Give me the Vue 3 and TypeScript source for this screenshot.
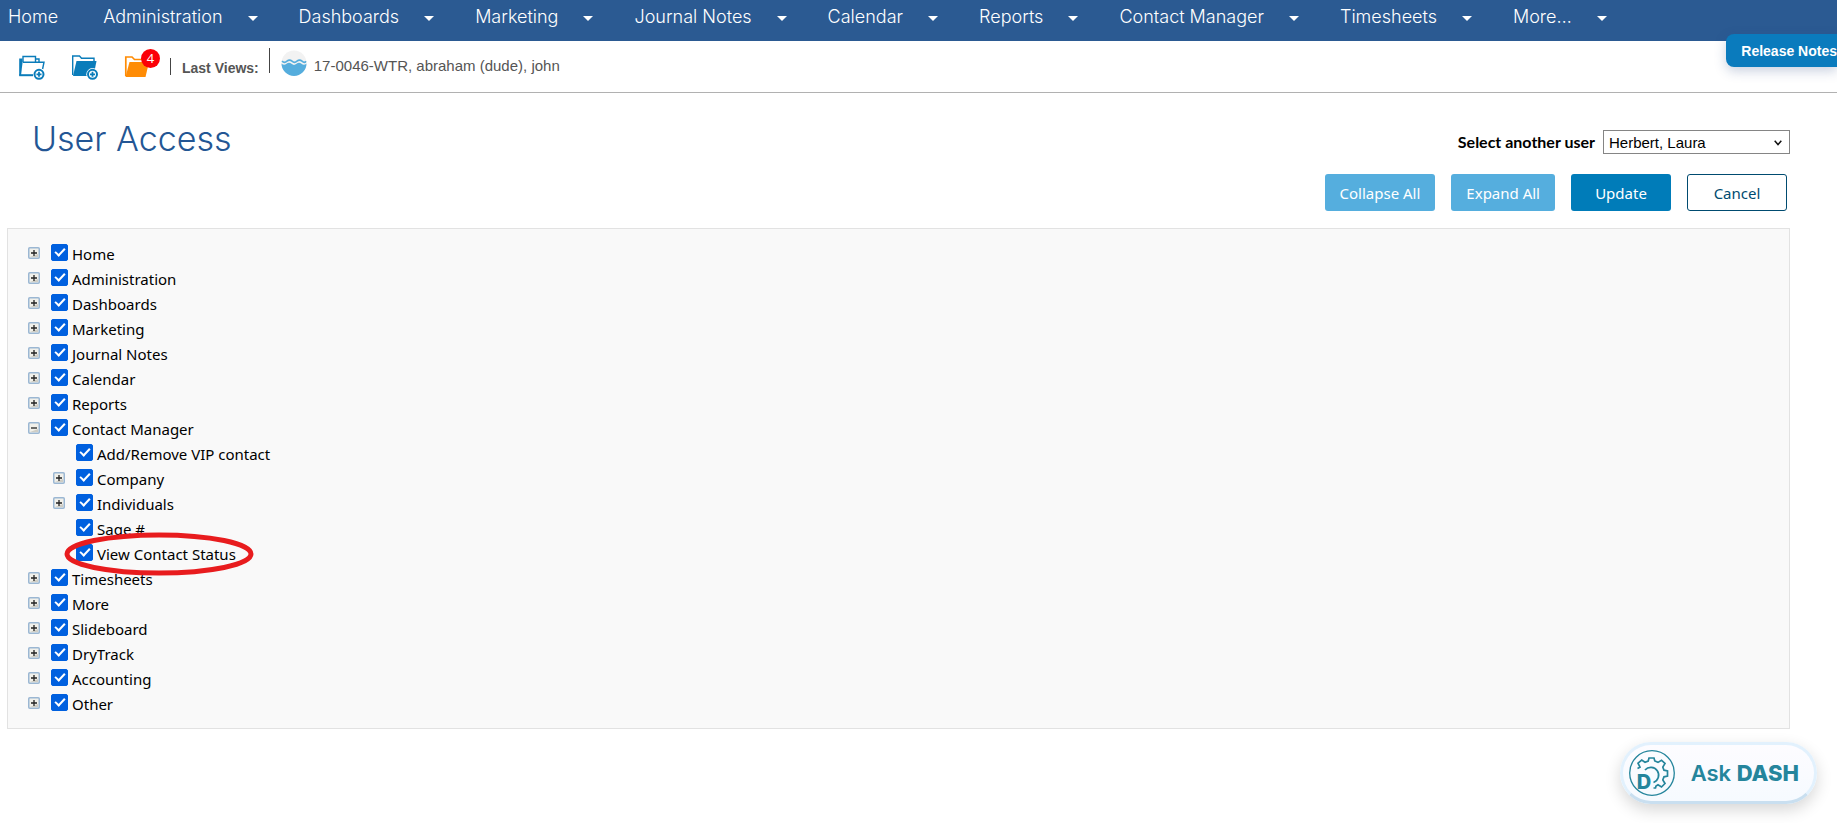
<script setup lang="ts">
import { reactive, ref } from 'vue'

interface TreeNode {
  label: string
  checked: boolean
  expandable: boolean
  open: boolean
  circled?: boolean
  children: TreeNode[]
}

const leaf = (label: string, expandable = false, circled = false): TreeNode => ({
  label,
  checked: true,
  expandable,
  open: false,
  circled,
  children: [],
})

const menus = [
  'Administration',
  'Dashboards',
  'Marketing',
  'Journal Notes',
  'Calendar',
  'Reports',
  'Contact Manager',
  'Timesheets',
  'More…',
]

const tree = reactive<TreeNode[]>([
  leaf('Home', true),
  leaf('Administration', true),
  leaf('Dashboards', true),
  leaf('Marketing', true),
  leaf('Journal Notes', true),
  leaf('Calendar', true),
  leaf('Reports', true),
  {
    label: 'Contact Manager',
    checked: true,
    expandable: true,
    open: true,
    children: [
      leaf('Add/Remove VIP contact'),
      leaf('Company', true),
      leaf('Individuals', true),
      leaf('Sage #'),
      leaf('View Contact Status', false, true),
    ],
  },
  leaf('Timesheets', true),
  leaf('More', true),
  leaf('Slideboard', true),
  leaf('DryTrack', true),
  leaf('Accounting', true),
  leaf('Other', true),
])

const user = ref('Herbert, Laura')

function setAll(open: boolean) {
  tree.forEach((node) => (node.open = open))
}
</script>

<template>
  <div class="page">
    <nav class="nav">
      <a class="nav-link" href="#">Home</a>
      <a v-for="menu in menus" :key="menu" class="nav-link" href="#">
        {{ menu }}
        <svg class="caret" width="10" height="5" viewBox="0 0 10 5"><path d="M0 0h10L5 5z" fill="#fff" /></svg>
      </a>
    </nav>

    <button class="release" type="button">Release Notes</button>

    <div class="toolbar">
      <button class="tool" type="button" aria-label="New job">
        <svg width="28" height="26" viewBox="0 0 28 26" fill="none" stroke="#0a7cba" stroke-width="1.4">
          <path d="M1.200 4.500H4.500V9L3 21.500H1.200z" fill="#0a7cba" stroke="none" />
          <path d="M1.200 21.200H15" stroke-width="2" />
          <path d="M4.800 8.200H26L24.600 15" />
          <path d="M5 8V2.500H17.500V8M17.500 5H21V8" />
          <circle cx="21" cy="20.300" r="4.500" fill="#fff" stroke-width="2" />
          <path d="M21 17.800v5M18.500 20.300h5" stroke-width="1.800" />
        </svg>
      </button>
      <button class="tool" type="button" aria-label="New folder">
        <svg width="28" height="26" viewBox="0 0 28 26" fill="none" stroke="#0a7cba">
          <path d="M1.700 21V2H8.500L10.500 4.200H23V7" stroke-width="1.400" />
          <path d="M5.500 7H25.500L22.500 22H2z" fill="#0a7cba" stroke="none" />
          <circle cx="21.500" cy="20.300" r="6.200" fill="#fff" stroke="none" />
          <circle cx="21.500" cy="20.300" r="4.500" fill="#fff" stroke-width="2" />
          <path d="M21.500 17.800v5M19 20.300h5" stroke-width="1.800" />
        </svg>
      </button>
      <button class="tool alerts" type="button" aria-label="Open folders">
        <svg width="26" height="26" viewBox="0 0 26 26" fill="none">
          <path d="M1.800 22V3H8L10.500 5.500H22V8" stroke="#ff8c05" stroke-width="1.700" />
          <path d="M5.500 8H25L21.500 23H1.500z" fill="#ff8c05" />
        </svg>
        <span class="badge">4</span>
      </button>
      <span class="rule short"></span>
      <span class="last">Last Views:</span>
      <span class="rule tall"></span>
      <a class="view" href="#">
        <svg width="26" height="26" viewBox="0 0 26 26">
          <circle cx="13" cy="13" r="12.500" fill="#f2f2f2" />
          <path d="M.5 13.500Q3 16 5.500 13.800T10.500 13.800T15.500 13.800T20.500 13.800T25.500 13.500A12.500 12.500 0 0 1 .5 13.500z" fill="#55addd" />
          <path d="M1 11.200Q3.500 13.500 6 11.200T11 11.200T16 11.200T21 11.200T25 11.200" fill="none" stroke="#55addd" stroke-width="1.600" />
        </svg>
        <span class="view-text">17-0046-WTR, abraham (dude), john</span>
      </a>
    </div>

    <main class="main">
      <header class="head">
        <h1 class="title">User Access</h1>
        <div class="side">
          <div class="picker">
            <label class="picker-label" for="user">Select another user</label>
            <span class="select-wrap">
              <select id="user" v-model="user" class="select">
                <option>Herbert, Laura</option>
              </select>
              <svg class="chevron" width="8" height="6" viewBox="0 0 8 6"><path d="M.7.8L4 4.600L7.300.8" fill="none" stroke="#111" stroke-width="1.500" /></svg>
            </span>
          </div>
          <div class="actions">
            <button class="btn light" type="button" @click="setAll(false)">Collapse All</button>
            <button class="btn light" type="button" @click="setAll(true)">Expand All</button>
            <button class="btn solid" type="button">Update</button>
            <button class="btn outline" type="button">Cancel</button>
          </div>
        </div>
      </header>

      <section class="panel">
        <ul class="tree">
          <li v-for="node in tree" :key="node.label">
            <div class="row">
              <button class="expander" type="button" :aria-label="'Toggle ' + node.label" @click="node.open = !node.open">
                <svg width="12" height="12" viewBox="0 0 12 12">
                  <rect x=".75" y=".75" width="10.500" height="10.500" rx="1" fill="#f1f0ea" stroke="#9bb7d3" stroke-width="1.500" />
                  <path d="M2 10H10V7z" fill="#cfcdc4" />
                  <path :d="node.open ? 'M3 6h6' : 'M3 6h6M6 3v6'" stroke="#222" stroke-width="1.300" />
                </svg>
              </button>
              <label class="item"><input v-model="node.checked" class="check" type="checkbox" /><span class="text">{{ node.label }}</span></label>
            </div>
            <ul v-if="node.open && node.children.length" class="branch">
              <li v-for="child in node.children" :key="child.label">
                <div class="row">
                  <button v-if="child.expandable" class="expander" type="button" :aria-label="'Toggle ' + child.label" @click="child.open = !child.open">
                    <svg width="12" height="12" viewBox="0 0 12 12">
                      <rect x=".75" y=".75" width="10.500" height="10.500" rx="1" fill="#f1f0ea" stroke="#9bb7d3" stroke-width="1.500" />
                      <path d="M2 10H10V7z" fill="#cfcdc4" />
                      <path :d="child.open ? 'M3 6h6' : 'M3 6h6M6 3v6'" stroke="#222" stroke-width="1.300" />
                    </svg>
                  </button>
                  <span v-else class="expander"></span>
                  <label class="item"><input v-model="child.checked" class="check" type="checkbox" /><span class="text">{{ child.label }}</span></label>
                  <svg v-if="child.circled" class="ring" width="192" height="44" viewBox="0 0 192 44">
                    <ellipse cx="96" cy="22" rx="92" ry="19" fill="none" stroke="#e81c1e" stroke-width="5" />
                  </svg>
                </div>
              </li>
            </ul>
          </li>
        </ul>
      </section>
    </main>

    <button class="ask" type="button">
      <svg width="46" height="46" viewBox="0 0 46 46" fill="none" stroke="#25859c">
        <circle cx="23" cy="23" r="22.300" stroke-width="1.300" />
        <path d="M8.500 18.500L11 17.200L9 13.200L12.700 10L16 12.300L19.200 11L20 8H25L25.800 11L29 12.400L32.500 10.200L36 13.500L33.800 17L35 20.200L38.500 21V26L35 26.800L33.800 30L36 33.500L32.500 37L29 34.800L27 36L26.500 38H24.500" stroke-width="1.700" />
        <path d="M16 20A7.800 7.800 0 1 1 24.500 32.500" stroke-width="1.700" />
      </svg>
      <span class="ask-d">D</span>
      <span>Ask <b>DASH</b></span>
    </button>
  </div>
</template>

<style>
body {
  margin: 0;
  overflow: hidden;
  background: #fff;
}
</style>

<style scoped>
.page {
  position: relative;
  min-height: 100vh;
  overflow: hidden;
  font-family: 'Liberation Sans', Arial, sans-serif;
}
button {
  cursor: pointer;
  font-family: inherit;
}
.nav {
  display: flex;
  gap: 41px;
  height: 41px;
  padding-left: 8px;
  background: #2b5a92;
}
.nav-link {
  display: flex;
  align-items: center;
  gap: 25px;
  height: 33px;
  color: #fff;
  font-family: Inter, 'Liberation Sans', sans-serif;
  font-size: 18px;
  font-weight: 300;
  text-decoration: none;
  white-space: nowrap;
}
.nav-link:first-child {
  margin-right: 4px;
}
.caret {
  margin-top: 3px;
}
.release {
  position: absolute;
  top: 34px;
  right: 0;
  height: 33px;
  padding: 0 0 0 15px;
  border: 0;
  border-radius: 8px 0 0 8px;
  background: #0a7bbd;
  box-shadow: 0 4px 12px rgba(40, 70, 130, 0.25);
  color: #fff;
  font-size: 14px;
  font-weight: 700;
}
.toolbar {
  display: flex;
  align-items: center;
  height: 51px;
  padding-left: 18px;
  border-bottom: 1px solid #b1b1b1;
  color: #555;
}
.tool {
  position: relative;
  display: flex;
  margin-right: 25px;
  padding: 0;
  border: 0;
  background: none;
}
.tool.alerts {
  margin-right: 20px;
}
.badge {
  position: absolute;
  top: -5px;
  right: -10px;
  width: 19px;
  height: 19px;
  border-radius: 50%;
  background: #fb0007;
  color: #fff;
  font: 13px/19px 'Open Sans', sans-serif;
  text-align: center;
}
.rule {
  width: 1px;
  background: #444;
}
.short {
  height: 17px;
}
.tall {
  height: 25px;
  margin-bottom: 12px;
}
.last {
  margin: 2px 10px 0 11px;
  font-size: 14px;
  font-weight: 700;
}
.view {
  display: flex;
  align-items: flex-start;
  gap: 7px;
  margin: 0 0 8px 11px;
  color: #555;
  font-size: 15px;
  line-height: 18px;
  text-decoration: none;
}
.view-text {
  padding-top: 7px;
}
.main {
  padding: 22px 47px 0 7px;
}
.head {
  display: flex;
  justify-content: space-between;
}
.title {
  margin: 0 0 0 25px;
  color: #235694;
  font: 300 34px/48px Inter, 'Liberation Sans', sans-serif;
}
.side {
  padding-top: 15px;
}
.picker {
  display: flex;
  align-items: center;
  justify-content: flex-end;
  gap: 8px;
}
.picker-label {
  font: 700 16px/24px Lato, sans-serif;
}
.select-wrap {
  position: relative;
  display: flex;
}
.select {
  width: 187px;
  height: 24px;
  padding: 0 5px;
  border: 1px solid #858585;
  border-radius: 0;
  appearance: none;
  background: #fff;
  color: #000;
  font: 15px 'Liberation Sans', Arial, sans-serif;
}
.chevron {
  position: absolute;
  top: 10px;
  right: 8px;
  pointer-events: none;
}
.actions {
  display: flex;
  justify-content: flex-end;
  gap: 16px;
  margin: 20px 3px 0 0;
}
.btn {
  height: 37px;
  padding: 0 14px;
  border: 1px solid transparent;
  border-radius: 3px;
  color: #fff;
  font: 15px 'Noto Sans', sans-serif;
}
.light {
  background: #55aede;
}
.solid {
  min-width: 100px;
  background: #007cb9;
}
.outline {
  min-width: 100px;
  border-color: #004b70;
  background: #fff;
  color: #004b70;
}
.panel {
  margin-top: 17px;
  padding: 11px 20px 13px;
  border: 1px solid #e2e2e2;
  background: #f9f9f9;
}
.tree,
.branch {
  margin: 0;
  padding: 0;
  list-style: none;
}
.branch {
  padding-left: 25px;
}
.row {
  position: relative;
  display: flex;
  align-items: center;
  gap: 11px;
  height: 25px;
}
.expander {
  display: flex;
  width: 12px;
  height: 12px;
  padding: 0;
  border: 0;
  background: none;
}
.item {
  display: flex;
  align-items: center;
  gap: 4px;
}
.check {
  position: relative;
  width: 17px;
  height: 17px;
  margin: 0;
  border: 1px solid #0060df;
  border-radius: 2px;
  appearance: none;
  background: #fff;
}
.check:checked {
  background: #0060df;
}
.check:checked::after {
  content: '';
  position: absolute;
  top: 1px;
  left: 5px;
  width: 4px;
  height: 8px;
  border: solid #fff;
  border-width: 0 2px 2px 0;
  transform: rotate(43deg);
}
.text {
  padding-top: 3px;
  color: #000;
  font: 15px/22px 'Noto Sans', sans-serif;
}
.ring {
  position: absolute;
  top: -8px;
  left: 10px;
  pointer-events: none;
}
.ask {
  position: absolute;
  right: 20px;
  bottom: 19px;
  display: flex;
  align-items: center;
  gap: 16px;
  height: 62px;
  padding: 0 15px 0 6px;
  border: 3px solid #e2f1fd;
  border-bottom-color: #c9dff0;
  border-radius: 31px;
  background: linear-gradient(#fdfcff, #f6faff);
  box-shadow: 0 6px 16px rgba(0, 0, 0, 0.16);
  color: #25859c;
  font: 600 22px Inter, sans-serif;
}
.ask b {
  font-weight: 800;
}
.ask-d {
  position: absolute;
  left: 14px;
  top: 25px;
  font-size: 20px;
  line-height: 24px;
  font-weight: 800;
}
</style>
